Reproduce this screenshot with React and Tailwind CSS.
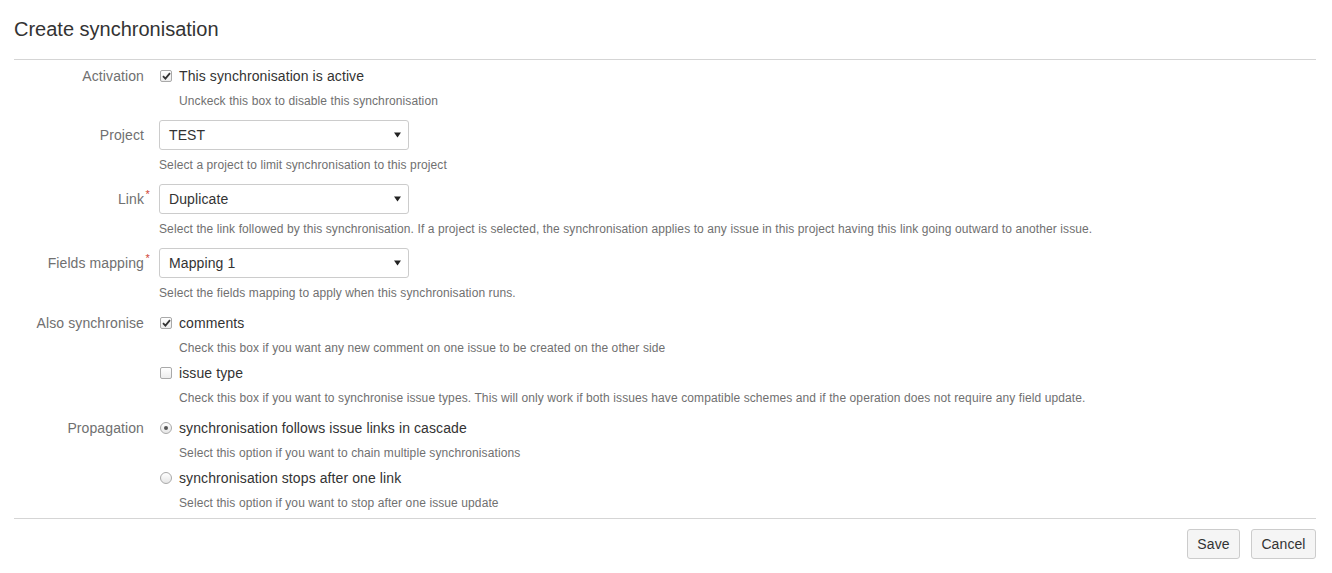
import React from 'react';

const font = { fontFamily: '"Liberation Sans", Arial, sans-serif' };

function Caret() {
  return (
    <svg width="7" height="6" viewBox="0 0 7 6" className="shrink-0">
      <path d="M0 0.5 L7 0.5 L3.5 5.5 Z" fill="#222" />
    </svg>
  );
}

function Checkbox({ checked }) {
  return (
    <span className="w-[12px] h-[12px] ml-[1px] rounded-[2px] border border-[#a9a9a9] bg-gradient-to-b from-white to-[#ececec] flex items-center justify-center shrink-0">
      {checked && (
        <svg width="9" height="8" viewBox="0 0 9 8">
          <path d="M1 4.2 L3.4 6.6 L8 1.2" stroke="#333" strokeWidth="1.8" fill="none" />
        </svg>
      )}
    </span>
  );
}

function Radio({ checked }) {
  return (
    <span className="w-[12px] h-[12px] ml-[1px] rounded-full border border-[#a9a9a9] bg-gradient-to-b from-white to-[#e6e6e6] flex items-center justify-center shrink-0">
      {checked && <span className="w-[4px] h-[4px] rounded-full bg-[#555]" />}
    </span>
  );
}

function Label({ children, required }) {
  return (
    <div className="w-[130px] shrink-0 text-right text-[14px] text-[#707070]">
      <span className="relative">
        {children}
        {required && (
          <span className="absolute -right-[6px] -top-[5px] text-[11px] text-[#d04437]">*</span>
        )}
      </span>
    </div>
  );
}

function Select({ value }) {
  return (
    <div className="w-[250px] h-[30px] border border-[#ccc] rounded-[3px] bg-white flex items-center justify-between pl-[9px] pr-[7px] text-[14px] text-[#333]">
      <span>{value}</span>
      <Caret />
    </div>
  );
}

function Help({ children, indent }) {
  return (
    <div className={`mt-[7px] leading-[16px] text-[12px] text-[#707070] ${indent ? 'pl-[20px]' : ''}`}>
      {children}
    </div>
  );
}

function Option({ type, checked, text }) {
  return (
    <div className="h-[20px] flex items-center gap-[7px] text-[14px] text-[#333]">
      {type === 'radio' ? <Radio checked={checked} /> : <Checkbox checked={checked} />}
      <span>{text}</span>
    </div>
  );
}

function SelectRow({ label, required, value, help, top }) {
  return (
    <div className={`flex gap-[15px] ${top}`}>
      <div className="h-[30px] flex items-center">
        <Label required={required}>{label}</Label>
      </div>
      <div>
        <Select value={value} />
        <Help>{help}</Help>
      </div>
    </div>
  );
}

export default function App() {
  return (
    <div style={font} className="bg-white w-[1332px] h-[573px] pl-[14px] pr-[16px] text-[#333] tracking-[0.1px]">
      <h1 className="pt-[15px] h-[43px] leading-[28px] text-[20px] text-[#333] tracking-normal">Create synchronisation</h1>
      <div className="mt-[16px] border-t border-[#d5d5d5]" />

      <div className="flex gap-[15px] mt-[6px]">
        <div className="h-[20px] flex items-center">
          <Label>Activation</Label>
        </div>
        <div>
          <Option checked text="This synchronisation is active" />
          <Help indent>Unckeck this box to disable this synchronisation</Help>
        </div>
      </div>

      <SelectRow
        top="mt-[11px]"
        label="Project"
        value="TEST"
        help="Select a project to limit synchronisation to this project"
      />
      <SelectRow
        top="mt-[11px]"
        label="Link"
        required
        value="Duplicate"
        help="Select the link followed by this synchronisation. If a project is selected, the synchronisation applies to any issue in this project having this link going outward to another issue."
      />
      <SelectRow
        top="mt-[11px]"
        label="Fields mapping"
        required
        value="Mapping 1"
        help="Select the fields mapping to apply when this synchronisation runs."
      />

      <div className="flex gap-[15px] mt-[12px]">
        <div className="h-[20px] flex items-center">
          <Label>Also synchronise</Label>
        </div>
        <div>
          <Option checked text="comments" />
          <Help indent>Check this box if you want any new comment on one issue to be created on the other side</Help>
          <div className="mt-[7px]">
            <Option text="issue type" />
          </div>
          <Help indent>
            Check this box if you want to synchronise issue types. This will only work if both issues have compatible schemes and if the operation does not require any field update.
          </Help>
        </div>
      </div>

      <div className="flex gap-[15px] mt-[12px]">
        <div className="h-[20px] flex items-center">
          <Label>Propagation</Label>
        </div>
        <div>
          <Option type="radio" checked text="synchronisation follows issue links in cascade" />
          <Help indent>Select this option if you want to chain multiple synchronisations</Help>
          <div className="mt-[7px]">
            <Option type="radio" text="synchronisation stops after one link" />
          </div>
          <Help indent>Select this option if you want to stop after one issue update</Help>
        </div>
      </div>

      <div className="mt-[7px] border-t border-[#d5d5d5]" />
      <div className="flex justify-end gap-[11px] mt-[10px]">
        <button className="h-[30px] w-[53px] border border-[#ccc] rounded-[3px] bg-[#f5f5f5] text-[14px] text-[#333]">
          Save
        </button>
        <button className="h-[30px] w-[65px] border border-[#ccc] rounded-[3px] bg-[#f5f5f5] text-[14px] text-[#333]">
          Cancel
        </button>
      </div>
    </div>
  );
}
